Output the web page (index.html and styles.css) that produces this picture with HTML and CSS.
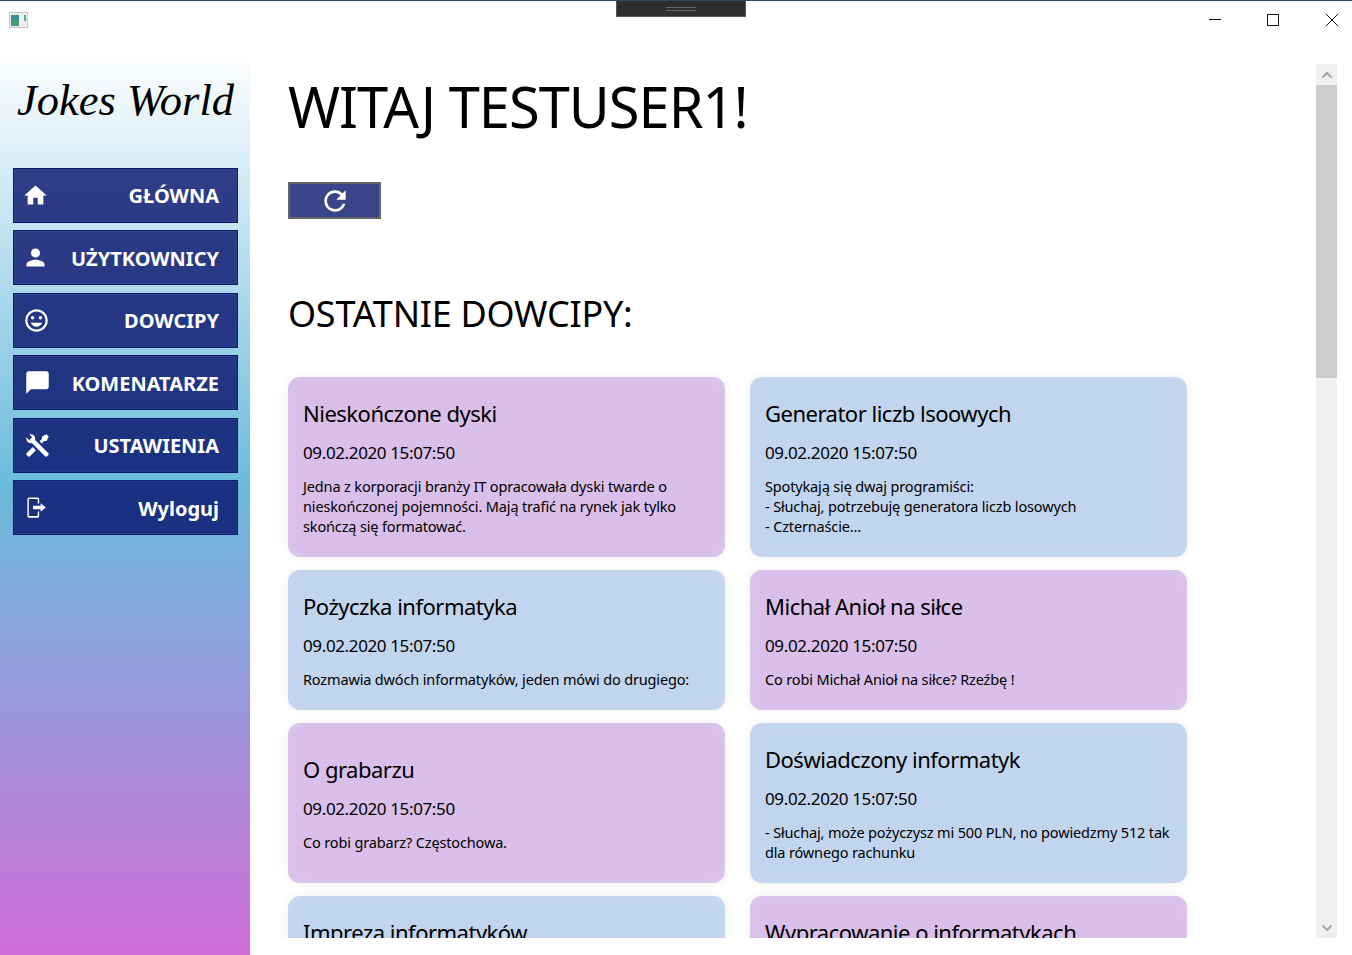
FILE: index.html
```html
<!DOCTYPE html>
<html lang="pl">
<head>
<meta charset="utf-8">
<title>Jokes World</title>
<link rel="stylesheet" href="styles.css">
</head>
<body>
<div class="window">
  <header class="titlebar">
    <svg class="app-icon" viewBox="0 0 19 16" width="19" height="16"><rect x="0.5" y="0.5" width="18" height="15" fill="#eef0ef" stroke="#c4c8c8"/><rect x="2" y="3" width="8" height="11" fill="#3d8f95"/><rect x="2" y="9" width="8" height="5" fill="#45a06b"/><rect x="15" y="3" width="2" height="6" fill="#5aa49c"/></svg>
    <div class="drag-handle"><span class="grip"></span></div>
    <div class="win-buttons">
      <svg class="win-btn" viewBox="0 0 12 12" width="12" height="12"><path d="M0 5.5H12" stroke="#111" fill="none"/></svg>
      <svg class="win-btn" viewBox="0 0 12 12" width="12" height="12"><rect x="0.5" y="0.5" width="11" height="11" stroke="#111" fill="none"/></svg>
      <svg class="win-btn win-close" viewBox="0 0 12 12" width="12" height="12"><path d="M0 0L12 12M12 0L0 12" stroke="#111" fill="none"/></svg>
    </div>
  </header>
  <div class="body-row">
    <aside class="sidebar">
      <div class="logo">Jokes World</div>
      <nav class="nav">
        <a class="nav-item"><svg class="nav-icon" viewBox="0 0 24 24"><path d="M10 20v-6h4v6h5v-8h3L12 3 2 12h3v8z"/></svg><span>GŁÓWNA</span></a>
        <a class="nav-item"><svg class="nav-icon" viewBox="0 0 24 24"><path d="M12 12c2.21 0 4-1.79 4-4s-1.79-4-4-4-4 1.79-4 4 1.79 4 4 4zm0 2c-2.67 0-8 1.34-8 4v2h16v-2c0-2.66-5.33-4-8-4z"/></svg><span>UŻYTKOWNICY</span></a>
        <a class="nav-item"><svg class="nav-icon shift-1" viewBox="0 0 24 24"><circle cx="15.5" cy="9.5" r="1.5"/><circle cx="8.5" cy="9.5" r="1.5"/><path d="M12 2C6.47 2 2 6.47 2 12s4.47 10 10 10 10-4.47 10-10S17.53 2 12 2zm0 18c-4.42 0-8-3.58-8-8s3.58-8 8-8 8 3.58 8 8-3.58 8-8 8zm0-2.500c2.330 0 4.310-1.460 5.110-3.500H6.890c.8 2.040 2.780 3.500 5.110 3.500z"/></svg><span>DOWCIPY</span></a>
        <a class="nav-item"><svg class="nav-icon shift-2" viewBox="0 0 24 24"><path d="M20 2H4c-1.100 0-1.990.9-1.990 2L2 22l4-4h14c1.100 0 2-.9 2-2V4c0-1.100-.9-2-2-2z"/></svg><span>KOMENATARZE</span></a>
        <a class="nav-item"><svg class="nav-icon shift-2" viewBox="0 0 24 24"><path d="M21.71 20.29L20.29 21.71A1 1 0 0 1 18.88 21.71L7 9.85A3.81 3.81 0 0 1 6 10A4 4 0 0 1 2.22 4.7L4.76 7.24L5.29 6.71L6.71 5.29L7.24 4.76L4.7 2.22A4 4 0 0 1 10 6A3.81 3.81 0 0 1 9.85 7L21.71 18.88A1 1 0 0 1 21.71 20.29M2.29 18.88A1 1 0 0 0 2.29 20.29L3.71 21.71A1 1 0 0 0 5.12 21.71L10.59 16.25L7.76 13.42M20 2L16 4V6L13.83 8.17L15.83 10.17L18 8H20L22 4Z"/></svg><span>USTAWIENIA</span></a>
        <a class="nav-item"><svg class="nav-icon shift-2" viewBox="0 0 24 24"><path d="M4.500 3.200h7.500A1.500 1.500 0 0 1 13.500 4.700V8.500h-1.300V4.500H4.300v15h7.900V15.500h1.300v4A1.500 1.500 0 0 1 12 21H4.500A1.500 1.500 0 0 1 3 19.500V4.700A1.500 1.500 0 0 1 4.500 3.200zM8 10.500h6.800V8.300L19.500 12l-4.700 3.700v-2.200H8z"/></svg><span>Wyloguj</span></a>
      </nav>
    </aside>
    <div class="content-col">
      <div class="content-row">
        <main class="content">
          <h1 class="welcome">WITAJ TESTUSER1!</h1>
          <button class="refresh"><svg viewBox="0 0 24 24" width="32" height="32"><path d="M17.65 6.35A7.958 7.958 0 0 0 12 4c-4.42 0-7.99 3.58-7.99 8s3.57 8 7.99 8c3.730 0 6.840-2.550 7.730-6h-2.080A5.990 5.990 0 0 1 12 18c-3.310 0-6-2.690-6-6s2.690-6 6-6c1.660 0 3.140.69 4.220 1.780L13 11h7V4l-2.350 2.350z"/></svg></button>
          <h2 class="section">OSTATNIE DOWCIPY:</h2>
          <div class="cards">
            <article class="card purple"><h3>Nieskończone dyski</h3><time>09.02.2020 15:07:50</time><p>Jedna z korporacji branży IT opracowała dyski twarde o nieskończonej pojemności. Mają trafić na rynek jak tylko skończą się formatować.</p></article>
            <article class="card blue"><h3>Generator liczb lsoowych</h3><time>09.02.2020 15:07:50</time><p>Spotykają się dwaj programiści:<br>- Słuchaj, potrzebuję generatora liczb losowych<br>- Czternaście...</p></article>
            <article class="card blue"><h3>Pożyczka informatyka</h3><time>09.02.2020 15:07:50</time><p>Rozmawia dwóch informatyków, jeden mówi do drugiego:</p></article>
            <article class="card purple"><h3>Michał Anioł na siłce</h3><time>09.02.2020 15:07:50</time><p>Co robi Michał Anioł na siłce? Rzeźbę !</p></article>
            <article class="card purple"><h3>O grabarzu</h3><time>09.02.2020 15:07:50</time><p>Co robi grabarz? Częstochowa.</p></article>
            <article class="card blue"><h3>Doświadczony informatyk</h3><time>09.02.2020 15:07:50</time><p>- Słuchaj, może pożyczysz mi 500 PLN, no powiedzmy 512 tak dla równego rachunku</p></article>
            <article class="card blue card-cut"><h3>Impreza informatyków</h3></article>
            <article class="card purple card-cut"><h3>Wypracowanie o informatykach</h3></article>
          </div>
        </main>
        <div class="scrollbar">
          <div class="sb-btn"><svg viewBox="0 0 12 8" width="12" height="8"><path d="M1.500 6.500L6 2l4.500 4.500" stroke="#a6a6a6" stroke-width="2" fill="none"/></svg></div>
          <div class="sb-track"><div class="sb-thumb"></div></div>
          <div class="sb-btn"><svg viewBox="0 0 12 8" width="12" height="8"><path d="M1.500 1.500L6 6l4.500-4.500" stroke="#a6a6a6" stroke-width="2" fill="none"/></svg></div>
        </div>
      </div>
    </div>
  </div>
</div>
</body>
</html>
```
FILE: styles.css
```css
* { box-sizing: border-box; }
html, body { margin: 0; height: 100%; }
body { background: #fff; color: #000; font-family: "Noto Sans", "Open Sans", sans-serif; overflow: hidden; }
.window { width: 1352px; height: 955px; display: flex; flex-direction: column; border-top: 1px solid #2b4a5e; }
.titlebar { height: 49px; flex: none; display: flex; align-items: flex-start; justify-content: space-between; position: relative; padding: 11px 14px 0 9px; }
.app-icon { flex: none; }
.drag-handle { position: absolute; left: 616px; top: 0; width: 130px; height: 16px; background: #2d2d2d; border: 1px solid #555; border-top: 0; display: flex; align-items: center; justify-content: center; }
.grip { width: 30px; height: 4px; border-top: 1px solid #666; border-bottom: 1px solid #666; }
.win-buttons { display: flex; gap: 46px; padding-top: 2px; }
.win-btn { display: block; }
.win-close { margin-left: 1px; }
.body-row { flex: 1; display: flex; min-height: 0; }
.sidebar { width: 250px; flex: none; background: linear-gradient(to bottom, #fff 0, #6abbdc 48%, #d06ed8 100%); padding: 0 12px 0 13px; }
.logo { height: 117.9px; padding: 20px 0 0 0; margin: 0 -13px; font-family: "Liberation Serif", serif; font-style: italic; font-size: 44.5px; line-height: 60px; text-align: center; white-space: nowrap; }
.nav { display: flex; flex-direction: column; gap: 7.5px; }
.nav-item { height: 55px; flex: none; display: flex; align-items: center; justify-content: space-between; background: rgba(1, 10, 103, .78); border: 1px solid #0a1a70; box-shadow: inset 0 0 0 1px rgba(255,255,255,.04); padding: 0 18px 0 8px; color: #fff; font-weight: 700; font-size: 20px; }
.nav-item span { padding-top: 1px; }
.nav-icon { width: 27px; height: 27px; fill: #fff; display: block; }
.shift-1 { margin-left: 1px; }
.shift-2 { margin-left: 2px; }
.content-col { flex: 1; min-width: 0; display: flex; flex-direction: column; padding-bottom: 17px; }
.content-row { flex: 1; min-height: 0; display: flex; padding-right: 15px; }
.content { flex: 1; min-width: 0; overflow: hidden; padding: 16px 0 0 38px; }
.welcome { margin: 0; font-weight: 400; font-size: 56px; letter-spacing: -1px; line-height: 80px; height: 82px; }
.refresh { display: flex; align-items: center; justify-content: center; margin-top: 34px; width: 93px; height: 37px; padding: 0; background: #3a4489; border: 2px solid #666; fill: #fff; }
.section { margin: 69px 0 0; font-weight: 400; font-size: 36px; letter-spacing: -.25px; line-height: 52px; height: 52px; }
.cards { display: grid; grid-template-columns: 437px 437px; column-gap: 25px; row-gap: 13px; margin-top: 37px; }
.card { border-radius: 12px; padding: 20px 15px 21px; display: flex; flex-direction: column; justify-content: center; box-shadow: 0 0 10px rgba(0,0,0,.07), inset 0 0 14px rgba(255,255,255,.12); }
.card-cut { justify-content: flex-start; height: 140px; }
.card.purple { background: #d9bfe9; }
.card.blue { background: #c2d5ee; }
.card h3 { margin: 0; font-weight: 400; font-size: 22px; letter-spacing: -.5px; line-height: 32px; }
.card time { display: block; margin-top: 12px; font-size: 17px; letter-spacing: -.37px; line-height: 24px; }
.card p { margin: 11px 0 0; font-size: 14.5px; letter-spacing: -.15px; line-height: 20px; }
.scrollbar { width: 21px; flex: none; margin-top: 14px; background: #f0f0f0; display: flex; flex-direction: column; }
.sb-btn { height: 21px; flex: none; display: flex; align-items: center; justify-content: center; }
.sb-track { flex: 1; }
.sb-thumb { height: 293px; background: #cdcdcd; }
```
